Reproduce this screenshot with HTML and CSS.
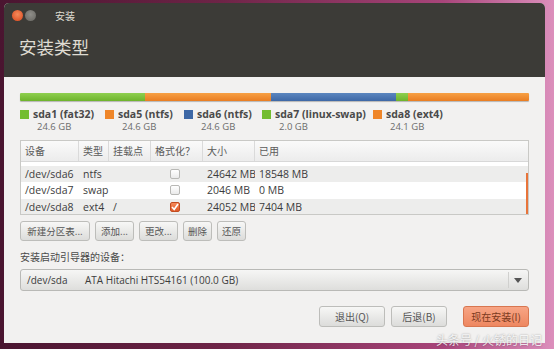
FILE: index.html
```html
<!DOCTYPE html>
<html lang="zh">
<head>
<meta charset="utf-8">
<link rel="stylesheet" href="styles.css">
</head>
<body>
<div class="window">
  <div class="dark">
    <div class="titlebar">
      <span class="wbtn close"></span>
      <span class="wbtn min"></span>
      <span class="title">安装</span>
    </div>
    <div class="heading">安装类型</div>
  </div>
  <div class="content">
    <div class="pbar">
      <div class="seg green" style="width:125px"></div>
      <div class="seg orange" style="width:126px"></div>
      <div class="seg blue" style="width:125px"></div>
      <div class="seg green" style="width:12px"></div>
      <div class="seg orange" style="flex:1"></div>
    </div>
    <div class="legend">
      <div class="litem w85"><span class="sq green"></span><div><div class="lname">sda1 (fat32)</div><div class="lsize">24.6 GB</div></div></div>
      <div class="litem w79"><span class="sq orange"></span><div><div class="lname">sda5 (ntfs)</div><div class="lsize">24.6 GB</div></div></div>
      <div class="litem w78"><span class="sq blue"></span><div><div class="lname">sda6 (ntfs)</div><div class="lsize">24.6 GB</div></div></div>
      <div class="litem w111"><span class="sq green"></span><div><div class="lname">sda7 (linux-swap)</div><div class="lsize">2.0 GB</div></div></div>
      <div class="litem"><span class="sq orange"></span><div><div class="lname">sda8 (ext4)</div><div class="lsize">24.1 GB</div></div></div>
    </div>
    <div class="table">
      <div class="thead">
        <div class="c c1">设备</div>
        <div class="c c2">类型</div>
        <div class="c c3">挂载点</div>
        <div class="c c4">格式化？</div>
        <div class="c c5">大小</div>
        <div class="c c6">已用</div>
      </div>
      <div class="tbody">
        <div class="rows">
          <div class="row white">
            <div class="c c1">/dev/sda5</div><div class="c c2">ntfs</div><div class="c c3"></div>
            <div class="c c4"><span class="cb"></span></div><div class="c c5">24642 MB</div><div class="c c6">15184 MB</div>
          </div>
          <div class="row gray">
            <div class="c c1">/dev/sda6</div><div class="c c2">ntfs</div><div class="c c3"></div>
            <div class="c c4"><span class="cb"></span></div><div class="c c5">24642 MB</div><div class="c c6">18548 MB</div>
          </div>
          <div class="row white">
            <div class="c c1">/dev/sda7</div><div class="c c2">swap</div><div class="c c3"></div>
            <div class="c c4"><span class="cb"></span></div><div class="c c5">2046 MB</div><div class="c c6">0 MB</div>
          </div>
          <div class="row gray">
            <div class="c c1">/dev/sda8</div><div class="c c2">ext4</div><div class="c c3">/</div>
            <div class="c c4"><span class="cb on"><svg width="8" height="8" viewBox="0 0 8 8"><path d="M1 4 L3.2 6.5 L7 1" fill="none" stroke="#fff" stroke-width="1.6"/></svg></span></div><div class="c c5">24052 MB</div><div class="c c6">7404 MB</div>
          </div>
        </div>
        <span class="scroll"></span>
      </div>
    </div>
    <div class="btnrow">
      <button class="btn b1">新建分区表...</button>
      <button class="btn b2">添加...</button>
      <button class="btn b2">更改...</button>
      <button class="btn b3">删除</button>
      <button class="btn b3">还原</button>
    </div>
    <div class="bootlabel">安装启动引导器的设备：</div>
    <div class="combo">
      <span class="dev">/dev/sda</span>
      <span class="disk">ATA Hitachi HTS54161 (100.0 GB)</span>
      <span class="arrow"><svg width="8" height="5" viewBox="0 0 8 5"><path d="M0 0 H8 L4 5 Z" fill="#555"/></svg></span>
    </div>
    <div class="actions">
      <button class="btn act">退出(Q)</button>
      <button class="btn act back">后退(B)</button>
      <button class="btn act primary">现在安装(I)</button>
    </div>
  </div>
</div>
<div class="watermark">头条号 / 火锈的日记</div>
</body>
</html>
```

FILE: styles.css
```css
* { box-sizing: border-box; }
html, body { margin: 0; padding: 0; }
body {
  width: 554px;
  height: 349px;
  overflow: hidden;
  position: relative;
  background: linear-gradient(90deg, #4a1530 0%, #6e2447 40%, #a8457a 80%, #dc8fbc 100%);
  font-family: "Open Sans", "Noto Sans CJK SC", sans-serif;
  padding: 3px 9px 0 4px;
}
.window {
  width: 541px;
  height: 340px;
  background: #f2f1f0;
  border-radius: 5px 5px 0 0;
  overflow: hidden;
  display: flex;
  flex-direction: column;
}
.dark {
  background: #3c3b37;
  height: 74px;
  display: flex;
  flex-direction: column;
}
.titlebar {
  height: 24px;
  display: flex;
  align-items: center;
  padding-left: 8px;
  gap: 2px;
}
.wbtn {
  width: 11px;
  height: 11px;
  border-radius: 50%;
  display: inline-block;
}
.close { background: radial-gradient(circle at 50% 40%, #f58a5a, #d9461c); }
.min { background: radial-gradient(circle at 50% 40%, #8f8e89, #65645f); }
.title {
  color: #dfdbd2;
  font-size: 10px;
  margin-left: 17px;
}
.heading {
  color: #dfdbd2;
  font-size: 17.5px;
  padding-left: 15px;
  margin-top: 7px;
  font-family: "Noto Sans CJK SC", sans-serif;
}
.content {
  padding: 16px 16px 0 16px;
  display: flex;
  flex-direction: column;
}
.pbar {
  height: 8px;
  display: flex;
  border-radius: 1px;
  overflow: hidden;
  box-shadow: 0 1px 1px rgba(0,0,0,0.25);
}
.seg { height: 100%; }
.seg.green { background: linear-gradient(#8fd04f, #6eb42c); }
.seg.orange { background: linear-gradient(#f7a044, #e97d22); }
.seg.blue { background: linear-gradient(#5b86bf, #3e68a6); }
.legend {
  display: flex;
  margin-top: 6px;
  height: 26px;
}
.litem { display: flex; align-items: flex-start; gap: 4px; }
.w85 { width: 85px; }
.w79 { width: 79px; }
.w78 { width: 78px; }
.w111 { width: 111px; }
.sq { width: 9px; height: 9px; margin-top: 3px; flex: none; }
.sq.green { background: #73bd30; }
.sq.orange { background: #ef8629; }
.sq.blue { background: #3e68a6; }
.lname { font-size: 10.5px; font-weight: bold; color: #4a4a4a; line-height: 14px; }
.lsize { font-size: 9.5px; color: #6c6c6c; line-height: 11px; padding-left: 4px; }
.table {
  margin-top: 7px;
  border: 1px solid #c9c9c6;
  background: #fff;
  height: 75px;
}
.thead {
  display: flex;
  height: 21px;
  background: linear-gradient(#fafafa, #ececec);
  border-bottom: 1px solid #d8d8d8;
}
.thead .c {
  font-size: 10px;
  color: #5a5a5a;
  line-height: 20px;
  border-right: 1px solid #dadada;
  font-family: "Noto Sans CJK SC", sans-serif;
}
.thead .c6 { border-right: none; }
.c { padding-left: 4px; white-space: nowrap; overflow: hidden; flex: none; }
.c1 { width: 58px; }
.c2 { width: 30px; }
.c3 { width: 42px; }
.c4 { width: 52px; }
.c5 { width: 52px; }
.c6 { flex: 1; }
.tbody {
  height: 52px;
  overflow: hidden;
  position: relative;
}
.rows { margin-top: -13px; }
.row {
  display: flex;
  height: 16.5px;
  align-items: center;
}
.row .c { font-size: 10.5px; color: #3c3c3c; }
.row.white { background: #fff; }
.row.gray { background: #ededec; }
.row .c4 { display: flex; justify-content: center; padding-left: 0; padding-right: 4px; }
.cb {
  width: 10px;
  height: 10px;
  border: 1px solid #b8b8b5;
  border-radius: 2px;
  background: linear-gradient(#fff, #eaeaea);
  display: inline-flex;
  align-items: center;
  justify-content: center;
}
.cb.on { background: linear-gradient(#f58a5a, #df5a28); border-color: #c24c20; }
.scroll {
  position: absolute;
  right: 0;
  top: 11px;
  width: 2px;
  height: 41px;
  background: #e8743a;
}
.btnrow {
  display: flex;
  gap: 5px;
  margin-top: 6px;
}
.btn {
  font-family: "Noto Sans CJK SC", sans-serif;
  font-size: 9.5px;
  color: #555;
  height: 20px;
  border: 1px solid #bdbdba;
  border-radius: 3px;
  background: linear-gradient(#f7f7f6, #dcdcda);
  padding: 0;
  margin: 0;
  line-height: 18px;
}
.b1 { width: 70px; }
.b2 { width: 39px; }
.b3 { width: 29px; }
.bootlabel {
  font-size: 10px;
  color: #4a4a4a;
  margin-top: 9px;
  height: 14px;
  line-height: 14px;
}
.combo {
  margin-top: 5px;
  height: 22px;
  border: 1px solid #b9b9b6;
  border-radius: 3px;
  background: linear-gradient(#f6f6f5, #dededc);
  display: flex;
  align-items: center;
  padding-left: 6px;
  font-size: 10px;
  color: #3c3c3c;
}
.dev { width: 58px; }
.disk { flex: 1; }
.arrow {
  width: 18px;
  height: 16px;
  border-left: 1px solid #d0d0ce;
  display: flex;
  align-items: center;
  justify-content: center;
  margin-right: 2px;
}
.actions {
  display: flex;
  justify-content: flex-end;
  gap: 6px;
  margin-top: 15px;
}
.act { width: 66px; height: 21px; font-size: 10px; }
.act.back { width: 56px; margin-right: 10px; }
.primary {
  background: linear-gradient(#f7a585, #ee8760);
  border-color: #d87650;
  color: #7a3a20;
}
.watermark {
  position: absolute;
  right: 12px;
  bottom: 1px;
  font-size: 12px;
  color: rgba(255,255,255,0.85);
  font-family: "Noto Sans CJK SC", sans-serif;
  text-shadow: 0 0 2px rgba(0,0,0,0.4);
}
```
